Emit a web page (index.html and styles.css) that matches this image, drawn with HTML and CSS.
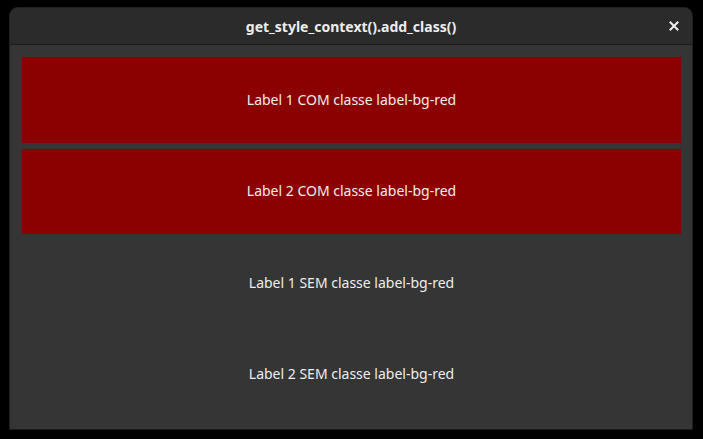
FILE: index.html
```html
<!DOCTYPE html>
<html>
<head>
<meta charset="utf-8">
<link rel="stylesheet" href="styles.css">
</head>
<body>
<div class="window">
  <header class="headerbar">
    <span class="title">get_style_context().add_class()</span>
    <button class="close" aria-label="Close">
      <svg width="10" height="10" viewBox="0 0 10 10"><path d="M1.5 1.5 L8.5 8.5 M8.5 1.5 L1.5 8.5" stroke="#eeeeec" stroke-width="2" stroke-linecap="square" fill="none"/></svg>
    </button>
  </header>
  <main class="content">
    <div class="label red">Label 1 COM classe label-bg-red</div>
    <div class="label red">Label 2 COM classe label-bg-red</div>
    <div class="label">Label 1 SEM classe label-bg-red</div>
    <div class="label">Label 2 SEM classe label-bg-red</div>
  </main>
</div>
</body>
</html>
```
FILE: styles.css
```css
html, body {
  margin: 0;
  padding: 0;
  background: #000;
  width: 703px;
  height: 439px;
  overflow: hidden;
}
body {
  padding: 7px 10px 9px 9px;
  box-sizing: border-box;
  font-family: "Noto Sans", "Open Sans", sans-serif;
}
.window {
  width: 684px;
  height: 423px;
  border: 1px solid #1e1e1e;
  border-radius: 9px 9px 0 0;
  box-sizing: border-box;
  display: flex;
  flex-direction: column;
  overflow: hidden;
  background: #353535;
}
.headerbar {
  height: 36px;
  flex: none;
  background: #2b2b2b;
  border-bottom: 1px solid #1b1b1b;
  display: flex;
  align-items: center;
  justify-content: center;
  position: relative;
  color: #eeeeec;
}
.title {
  font-weight: bold;
  font-size: 14px;
}
.close {
  position: absolute;
  right: 13px;
  top: 13px;
  width: 10px;
  height: 10px;
  padding: 0;
  border: 0;
  background: none;
  display: flex;
}
.content {
  flex: 1;
  padding: 12px 11px 12px 12px;
  display: flex;
  flex-direction: column;
  gap: 6px;
}
.label {
  flex: 1;
  display: flex;
  align-items: center;
  justify-content: center;
  color: #eeeeec;
  font-size: 14px;
  padding-bottom: 1px;
}
.red {
  background: #8b0000;
}
```
